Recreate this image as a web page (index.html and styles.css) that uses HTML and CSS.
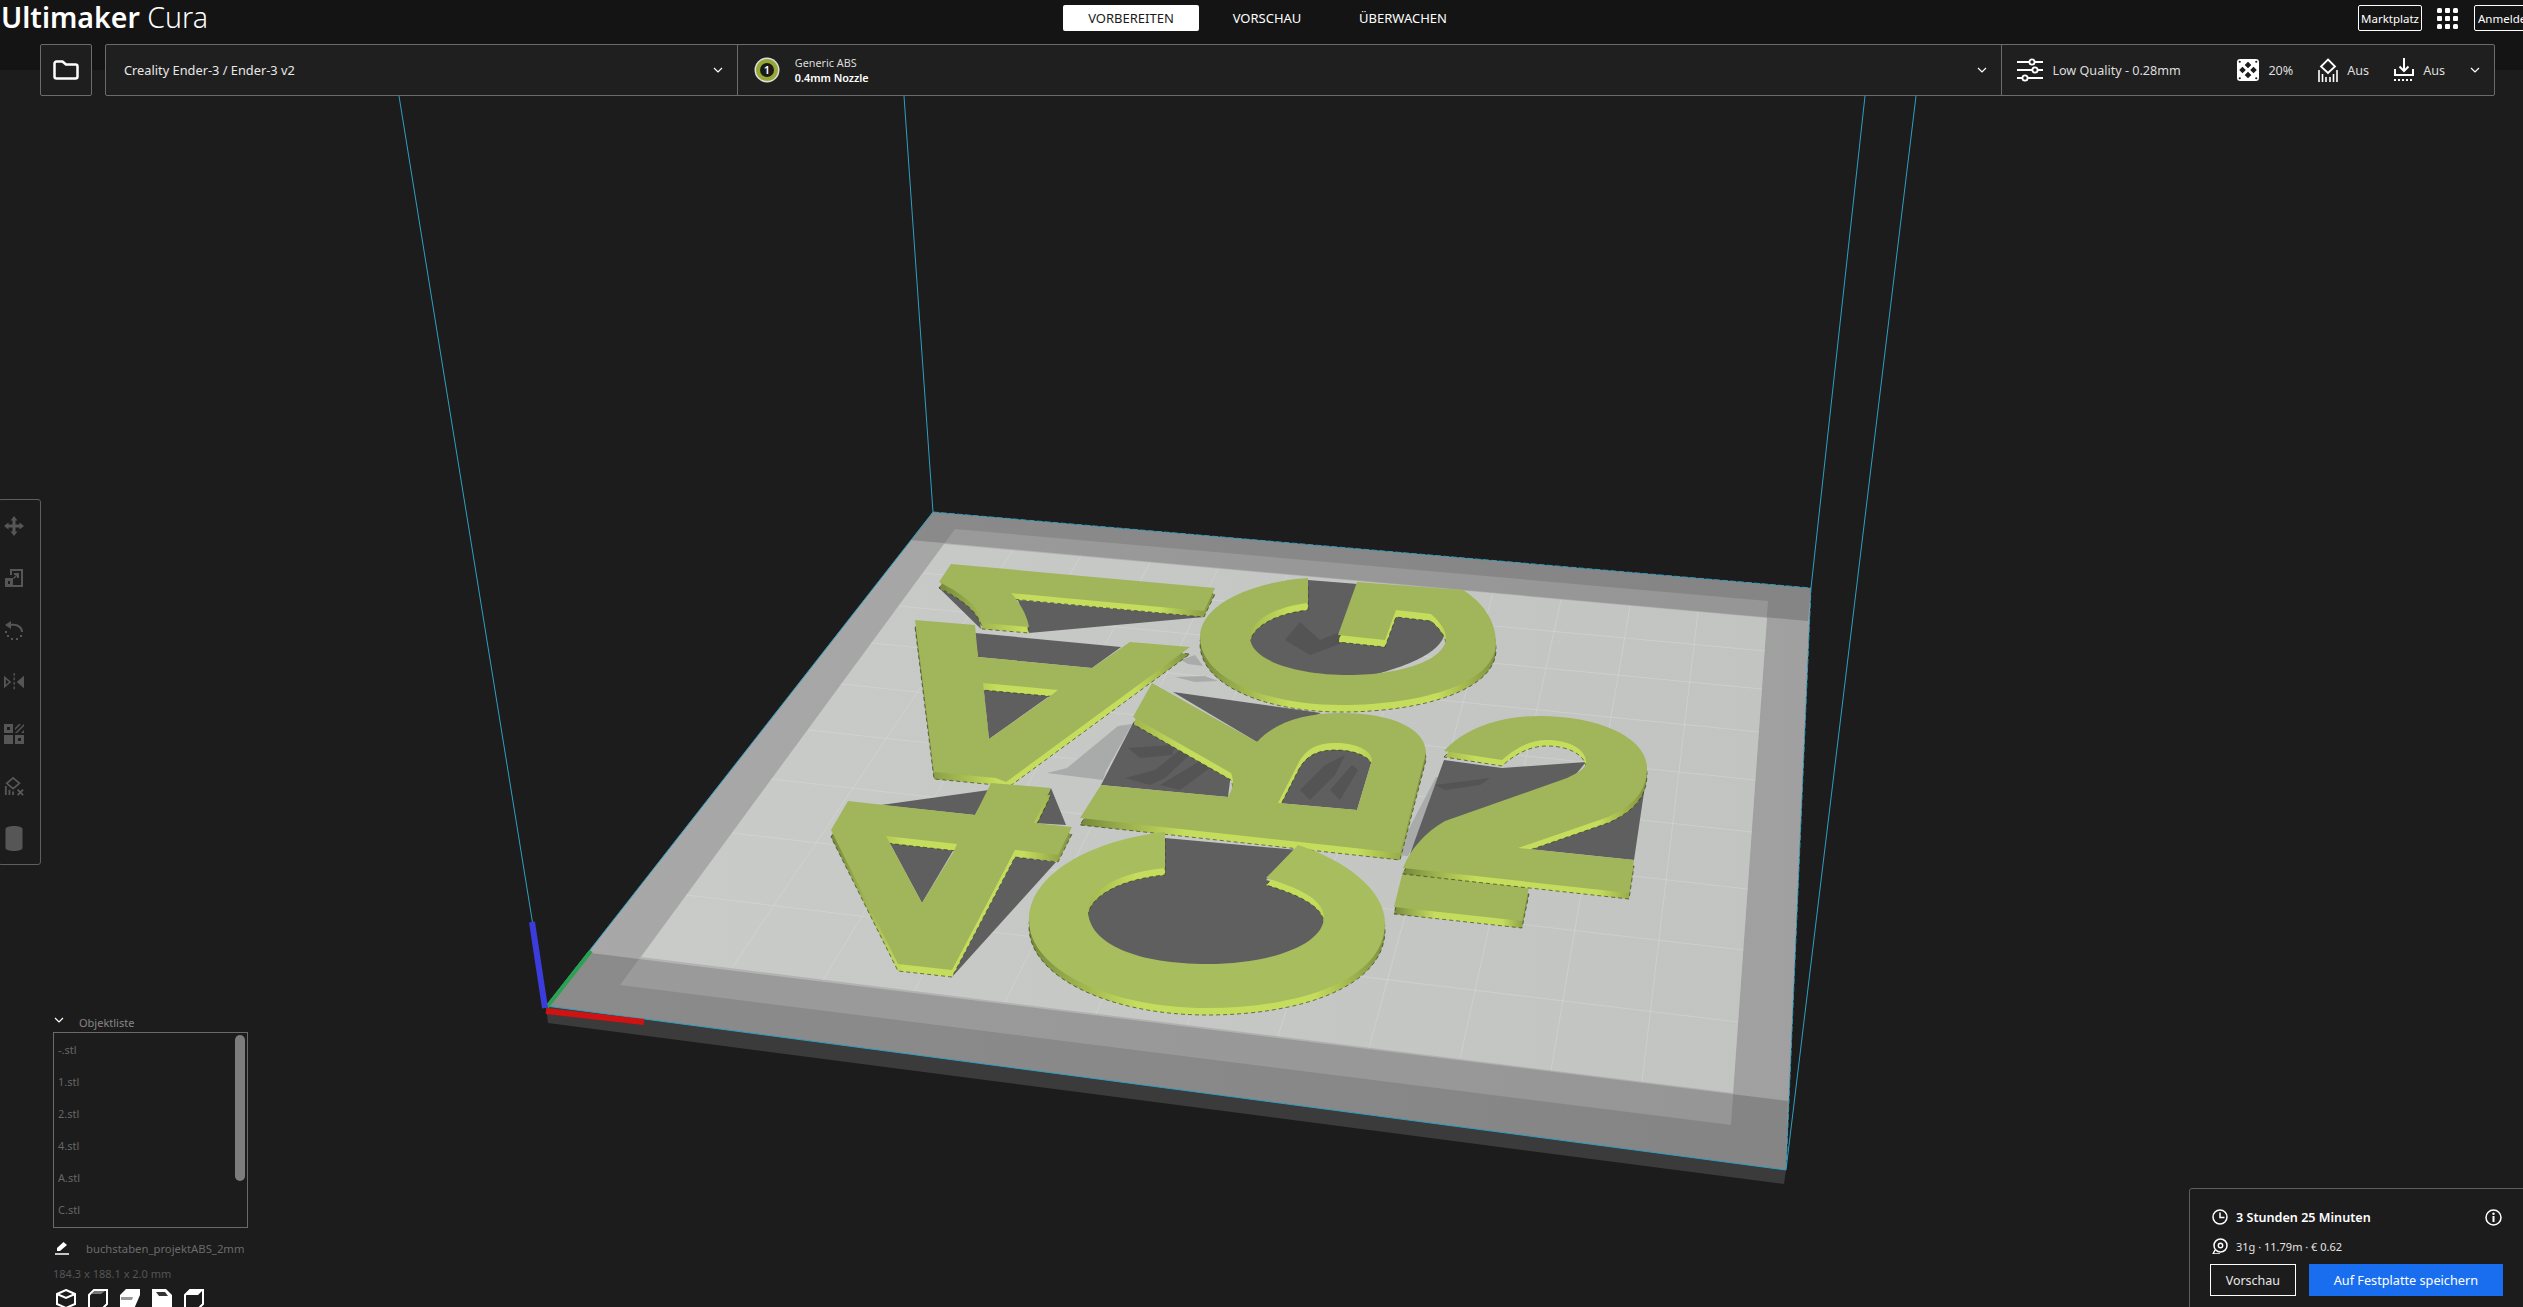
FILE: index.html
```html
<!DOCTYPE html>
<html lang="de">
<head>
<meta charset="utf-8">
<title>Ultimaker Cura</title>
<link rel="stylesheet" href="styles.css">
</head>
<body>
<svg class="scene" viewBox="0 0 2523 1307" width="2523" height="1307">
  <defs>
    <linearGradient id="sideGrad" x1="0" y1="0" x2="1" y2="0">
      <stop offset="0" stop-color="#76883a"/><stop offset=".1" stop-color="#93a84a"/>
      <stop offset=".3" stop-color="#c5dd5c"/><stop offset=".8" stop-color="#c5dd5c"/>
      <stop offset="1" stop-color="#7e9040"/>
    </linearGradient>
    <linearGradient id="plateGrad" x1="0" y1="0" x2="1" y2="0">
      <stop offset="0" stop-color="#c9cbc9"/><stop offset="1" stop-color="#c2c4c2"/>
    </linearGradient>
    <linearGradient id="bedGrad" x1="0" y1="0" x2="1" y2="0">
      <stop offset="0" stop-color="#a8a8a8"/><stop offset=".6" stop-color="#a4a4a4"/><stop offset="1" stop-color="#a0a0a0"/>
    </linearGradient>
    <path id="l1" d="M951,564 L1215,588 L1204,611 L1011,593 C1020,603 1027,615 1029,627 L982,623 C980,608 965,595 939,582 Z"/>
    <path id="lG" d="M1308,578 C1250,582 1200,605 1200,637 C1200,678 1265,705 1341,705 C1425,705 1496,682 1496,643 C1496,620 1482,602 1463,590 L1357,582 L1338,635 L1385,640 L1396,610 L1431,614 C1440,622 1446,630 1446,638 C1446,660 1400,675 1350,675 C1295,675 1250,660 1250,637 C1250,622 1272,607 1308,603 Z"/>
    <path id="lA" d="M915,620 L975,625 L978,657 L1092,668 L1130,642 L1190,647 L1006,782 L996,778 L934,772 Z M983,683 L989,739 L1049,697 L1058,690 Z"/>
    <path id="lB" d="M1152,683 L1257,742 C1275,722 1305,713 1341,713 C1395,713 1426,730 1426,753 L1400,853 L1080,818 L1101,785 L1228,797 C1235,785 1233,778 1231,773 L1133,717 Z M1278,803 L1357,810 L1372,760 C1372,750 1355,743 1336,743 C1315,743 1307,750 1300,760 Z"/>
    <path id="l4" d="M848,801 L975,815 L991,783 L1051,788 L1034,823 L1072,827 L1058,855 L1015,850 L952,970 L898,964 L831,830 Z M886,836 L922,903 L954,851 L957,844 Z"/>
    <path id="l2" d="M1444,751 C1465,728 1500,716 1539,716 C1600,716 1647,738 1647,768 C1647,790 1635,805 1608,817 L1518,848 L1634,860 L1629,893 L1403,868 C1410,850 1425,832 1445,821 L1567,778 C1580,772 1586,768 1586,762 C1586,750 1570,740 1547,740 C1530,740 1515,748 1502,760 Z"/>
    <path id="lD" d="M1403,871 L1529,887 L1522,921 L1394,907 Z"/>
    <path id="lC" d="M1165,832 C1090,840 1029,875 1029,920 C1029,970 1110,1008 1207,1008 C1300,1008 1385,980 1385,923 C1385,890 1345,860 1298,845 L1266,878 C1300,888 1324,900 1324,917 C1324,945 1270,964 1207,964 C1140,964 1088,945 1088,910 C1088,890 1120,872 1165,868 Z"/>
  </defs>

  <polygon class="bed-edge" points="546,1006 1786,1170 1784,1184 548,1023"/>
  <polygon fill="url(#bedGrad)" points="933,512 1811,588 1786,1170 546,1006"/>
  <polygon class="band" points="933,512 1811,588 1808,621 910,540"/>
  <polygon class="band" points="591,953 1788,1101 1786,1170 546,1006"/>
  <polygon class="inner" points="955,529 1768,601 1731,1125 620,985"/>
  <polygon fill="url(#plateGrad)" points="944,544 1767,618 1733,1093 641,957"/>
  <path class="grid" d="M1013,550L732,968M1081,556L823,980M1150,563L914,991M1218,569L1005,1002M1287,575L1096,1014M1356,581L1187,1025M1424,587L1278,1036M1493,593L1369,1048M1561,600L1460,1059M1630,606L1551,1070M1698,612L1642,1082M923,573L1765,651M899,606L1762,689M871,643L1759,732M841,684L1755,780M808,730L1752,832M771,779L1748,889M732,833L1743,950M686,895L1738,1022"/>

  <path class="wall" d="M399,96L546,1006L1786,1170L1916,96M904,96L933,512L546,1006M1865,96L1811,588"/>
  <path class="wall-dash" d="M933,512L1811,588L1786,1170"/>

  <path class="ghost" d="M1047,773 L1067,768 L1118,726 L1132,724 L1106,771 L1103,780 Z M1175,677 L1205,676 L1218,681 L1195,682 Z M1181,660 L1195,655 L1203,666 L1188,664 Z M1396,855 L1412,823 L1436,777 L1442,777 L1420,830 L1408,856 Z"/>

  <g class="hole">
    <polygon points="1018,600 1204,617 1029,633"/>
    <polygon points="939,588 981,629 977,608"/>
    <polygon points="975,633 1121,647 1092,668 978,657"/>
    <polygon points="983,683 1058,690 989,739"/>
    <path d="M1308,580 L1358,584 L1440,616 C1452,632 1450,660 1350,680 C1280,680 1240,660 1246,630 C1255,610 1290,600 1308,600 Z"/>
    <polygon points="1133,723 1231,773 1228,797 1101,785"/>
    <polygon points="1173,692 1257,742 1321,713"/>
    <path d="M1278,803 L1357,810 L1372,760 C1372,750 1355,743 1336,743 C1315,743 1307,750 1300,760 Z"/>
    <polygon points="881,805 989,790 975,815"/>
    <polygon points="1051,788 1034,823 1066,825"/>
    <polygon points="886,836 957,844 922,903"/>
    <polygon points="952,977 1015,857 1056,862"/>
    <polygon points="1444,760 1502,768 1586,762 1567,785 1410,854"/>
    <polygon points="1647,772 1518,848 1634,860"/>
    <path d="M1165,838 L1298,850 L1266,880 C1300,888 1330,900 1330,917 C1324,945 1270,970 1207,970 C1140,964 1084,945 1084,910 C1088,890 1120,868 1165,862 Z"/>
  </g>
  <path class="ghost-dark" d="M1128,748 L1175,745 L1172,755 L1140,758 Z M1125,778 L1155,770 L1190,742 L1200,745 L1165,778 L1150,785 Z M1160,785 L1210,755 L1218,762 L1180,790 Z M1300,790 L1325,765 L1345,755 L1335,775 L1310,800 Z M1330,790 L1352,765 L1358,770 L1340,800 Z M1285,640 L1300,622 L1320,640 L1345,630 L1350,640 L1310,655 Z M1435,785 L1490,778 L1480,785 L1445,790 Z"/>

  <g>
    <use href="#l1" class="side" transform="translate(0,6)"/><use href="#l1" class="top"/>
    <use href="#lG" class="side" transform="translate(0,7)"/><use href="#lG" class="top"/>
    <use href="#lA" class="side" transform="translate(0,7)"/><use href="#lA" class="top"/>
    <use href="#lB" class="side" transform="translate(0,7)"/><use href="#lB" class="top"/>
    <use href="#l4" class="side" transform="translate(0,7)"/><use href="#l4" class="top"/>
    <use href="#lD" class="side" transform="translate(0,7)"/><use href="#lD" class="top"/>
    <use href="#l2" class="side" transform="translate(0,6)"/><use href="#l2" class="top"/>
    <use href="#lC" class="side" transform="translate(0,7)"/><use href="#lC" class="top-c"/>
  </g>

  <line class="axis-g" x1="547" y1="1007" x2="591" y2="951"/>
  <line class="axis-b" x1="545" y1="1008" x2="532" y2="922"/>
  <line class="axis-r" x1="546" y1="1011" x2="644" y2="1022"/>
</svg>

<header class="header">
  <div class="logo"><span class="logo-bold">Ultimaker</span> <span class="logo-light">Cura</span></div>
  <nav class="tabs">
    <span class="tab tab-active">VORBEREITEN</span>
    <span class="tab">VORSCHAU</span>
    <span class="tab">ÜBERWACHEN</span>
  </nav>
  <div class="header-right">
    <span class="head-btn">Marktplatz</span>
    <svg class="apps" viewBox="0 0 21 21"><g fill="#fff"><rect x="0" y="0" width="5" height="5" rx="1.5"/><rect x="8" y="0" width="5" height="5" rx="1"/><rect x="16" y="0" width="5" height="5" rx="1.5"/><rect x="0" y="8" width="5" height="5" rx="1"/><rect x="8" y="8" width="5" height="5" rx="1"/><rect x="16" y="8" width="5" height="5" rx="1"/><rect x="0" y="16" width="5" height="5" rx="1.5"/><rect x="8" y="16" width="5" height="5" rx="1"/><rect x="16" y="16" width="5" height="5" rx="1.5"/></g></svg>
    <span class="head-btn head-btn-login">Anmelden</span>
  </div>
</header>

<div class="stage-menu">
  <div class="open-btn">
    <svg class="folder" viewBox="0 0 26 20"><path d="M1.5 3.5 a2 2 0 0 1 2-2 h6 l3.5 3 h9.500 a2 2 0 0 1 2 2 v10 a2 2 0 0 1-2 2 h-19 a2 2 0 0 1-2-2 Z" fill="none" stroke="#fff" stroke-width="2.500" stroke-linejoin="round"/></svg>
  </div>
  <div class="stage-panel">
    <div class="machine">
      <span>Creality Ender-3 / Ender-3 v2</span>
      <svg class="chev" viewBox="0 0 10 6"><path d="M1 1 L5 5 L9 1" fill="none" stroke="#fff" stroke-width="1.200"/></svg>
    </div>
    <div class="material">
      <svg class="extruder" viewBox="0 0 26 26"><circle cx="13" cy="13" r="12.500" fill="#ddd"/><circle cx="13" cy="13" r="11" fill="#95a836"/><circle cx="13" cy="13" r="7" fill="#1a1a1a"/><text x="13" y="17" text-anchor="middle" class="extruder-num">1</text></svg>
      <div class="material-text">
        <div>Generic ABS</div>
        <div class="nozzle">0.4mm Nozzle</div>
      </div>
      <svg class="chev chev-end" viewBox="0 0 10 6"><path d="M1 1 L5 5 L9 1" fill="none" stroke="#fff" stroke-width="1.200"/></svg>
    </div>
    <div class="quality">
      <svg class="i-sliders" viewBox="0 0 26 24"><g fill="none" stroke="#fff" stroke-width="1.800"><path d="M0 4 H12 M18 4 H26 M0 12 H15 M21 12 H26 M0 20 H5 M11 20 H26"/><circle cx="15" cy="4" r="2.600"/><circle cx="18" cy="12" r="2.600"/><circle cx="8" cy="20" r="2.600"/></g></svg>
      <span class="q-name">Low Quality - 0.28mm</span>
      <svg class="i-infill" viewBox="0 0 20 20"><rect width="20" height="20" rx="3" fill="#fff"/><g fill="#1c1c1c"><path d="M10 2.500 L13 5.500 L10 8.500 L7 5.500 Z M10 11.500 L13 14.500 L10 17.500 L7 14.500 Z M5 7 L8 10 L5 13 L2 10 Z M15 7 L18 10 L15 13 L12 10 Z"/><circle cx="2.500" cy="2.500" r="1"/><circle cx="17.500" cy="2.500" r="1"/><circle cx="2.500" cy="17.500" r="1"/><circle cx="17.500" cy="17.500" r="1"/></g></svg>
      <span class="q-val">20%</span>
      <svg class="i-support" viewBox="0 0 20 24"><path d="M10 1.500 L17 8.500 L10 15 L3 8.500 Z" fill="none" stroke="#fff" stroke-width="1.800"/><path d="M1 12 V24 M4.500 16 V24 M8 19 V24 M12 19 V24 M15.500 16 V24 M19 12 V24" stroke="#fff" stroke-width="1.600"/></svg>
      <span class="q-val">Aus</span>
      <svg class="i-adhesion" viewBox="0 0 20 24"><path d="M10 0 V13 M5.500 8.500 L10 13 L14.500 8.500" fill="none" stroke="#fff" stroke-width="2"/><path d="M1 11 V17 H19 V11" fill="none" stroke="#fff" stroke-width="2"/><path d="M0 22 H20" stroke="#fff" stroke-width="2" stroke-dasharray="2 2"/></svg>
      <span class="q-val">Aus</span>
      <svg class="chev chev-end" viewBox="0 0 10 6"><path d="M1 1 L5 5 L9 1" fill="none" stroke="#fff" stroke-width="1.200"/></svg>
    </div>
  </div>
</div>

<aside class="toolbar">
  <div class="tool"><svg viewBox="0 0 20 20"><path d="M10 0 L13.500 4.500 H11.500 V8.500 H15.500 V6.500 L20 10 L15.500 13.500 V11.500 H11.500 V15.500 H13.500 L10 20 L6.500 15.500 H8.500 V11.500 H4.500 V13.500 L0 10 L4.500 6.500 V8.500 H8.500 V4.500 H6.500 Z"/></svg></div>
  <div class="tool"><svg viewBox="0 0 20 20"><path d="M6 1 H19 V19 H9 V17 H17 V3 H8 V7 H6 Z M1 10 H9 V19 H1 Z M4 13 V16 H6 V13 Z M10 5 H15 V10 H13 V8 L10 11 L9 10 L12 7 H10 Z"/></svg></div>
  <div class="tool"><svg viewBox="0 0 20 20"><path d="M7 1 V4 C13 3 19 6 19 12 H17 C17 8 12 5 7 6 V9 L1 5 Z"/><path d="M1 11 h2 v2 h-2 Z M3 15 h2 v2 h-2 Z M7 18 h2 v2 h-2 Z M12 18 h2 v2 h-2 Z M16 15 h2 v2 h-2 Z"/></svg></div>
  <div class="tool"><svg viewBox="0 0 22 20"><path d="M0 3 L8 10 L0 17 Z M2 7 V13 L5.500 10 Z M22 3 L14 10 L22 17 Z"/><path d="M10.500 0 h1.500 v3 h-1.500 Z M10.500 5 h1.500 v3 h-1.500 Z M10.500 10 h1.500 v3 h-1.500 Z M10.500 15 h1.500 v3 h-1.500 Z"/></svg></div>
  <div class="tool"><svg viewBox="0 0 20 20"><path d="M0 0 H9 V9 H0 Z M3 3 V6 H6 V3 Z M11 11 H20 V20 H11 Z M14 14 V17 H17 V14 Z M0 11 H9 V20 H0 Z M11 4 L15 0 H17 L11 6 Z M11 9 L20 0 V2 L13 9 Z M17 9 L20 6 V9 Z"/></svg></div>
  <div class="tool"><svg viewBox="0 0 22 20"><path d="M10 1 L17 7 L10 13 L3 7 Z" fill="none" stroke="#5a5a5a" stroke-width="1.800"/><path d="M1 10 h2 v10 h-2 Z M5 14 h2 v6 h-2 Z M9 16 h2 v4 h-2 Z"/><path d="M15 14 L21 20 M21 14 L15 20" stroke="#5a5a5a" stroke-width="2"/></svg></div>
  <div class="tool"><svg class="cyl" viewBox="0 0 17 25"><path d="M0 3 C0 -1 17 -1 17 3 V22 C17 26 0 26 0 22 Z"/></svg></div>
</aside>

<section class="objects">
  <div class="objects-head">
    <svg class="obj-chev" viewBox="0 0 10 6"><path d="M1 1 L5 5 L9 1" fill="none" stroke="#fff" stroke-width="1.200"/></svg>
    <span>Objektliste</span>
  </div>
  <div class="objects-box">
    <div class="obj-row">-.stl</div>
    <div class="obj-row">1.stl</div>
    <div class="obj-row">2.stl</div>
    <div class="obj-row">4.stl</div>
    <div class="obj-row">A.stl</div>
    <div class="obj-row">C.stl</div>
    <div class="scrollbar"></div>
  </div>
  <div class="name-row">
    <svg class="pencil" viewBox="0 0 14 13"><path d="M8.500 0 L12 3 L5 9 H2 V6 Z" fill="#fff"/><path d="M0 12 H14" stroke="#fff" stroke-width="1.500"/></svg>
    <span>buchstaben_projektABS_2mm</span>
  </div>
  <div class="dims">184.3 x 188.1 x 2.0 mm</div>
  <div class="views">
    <svg viewBox="0 0 20 20"><path d="M10 1 L19 5 V15 L10 19 L1 15 V5 Z" fill="none" stroke="#fff" stroke-width="2"/><path d="M1 5 L10 9 L19 5" fill="none" stroke="#fff" stroke-width="2"/></svg>
    <svg viewBox="0 0 20 20"><path d="M6 1 H19 V15 L14 20 H1 V6 Z" fill="none" stroke="#fff" stroke-width="2"/><path d="M3 5 L7 2 H17 L13 5 Z" fill="#777"/></svg>
    <svg viewBox="0 0 20 20"><path d="M6 0 H20 V6 L14 20 H0 V6 Z" fill="#fff"/><path d="M1 8 H13 L12 11 H1 Z" fill="#9a9a9a"/></svg>
    <svg viewBox="0 0 20 20"><path d="M0 0 H14 L20 6 V20 H0 Z" fill="#fff"/><path d="M4 3 H13 L16 7 H7 Z" fill="#333"/></svg>
    <svg viewBox="0 0 20 20"><path d="M6 1 H19 V15 L14 20 H1 V6 Z" fill="none" stroke="#fff" stroke-width="2"/><path d="M1 6 L6 1 H19 L14 6 Z" fill="#fff"/></svg>
  </div>
</section>

<section class="action">
  <div class="action-row time-row">
    <svg class="a-icon" viewBox="0 0 16 16"><circle cx="8" cy="8" r="7" fill="none" stroke="#fff" stroke-width="1.500"/><path d="M8 3.500 V8.500 H12.500" fill="none" stroke="#fff" stroke-width="1.500"/></svg>
    <span class="time">3 Stunden 25 Minuten</span>
    <svg class="a-info" viewBox="0 0 17 17"><circle cx="8.500" cy="8.500" r="7.500" fill="none" stroke="#fff" stroke-width="1.500"/><path d="M8.500 7 V13" stroke="#fff" stroke-width="2"/><circle cx="8.500" cy="4.700" r="1.200" fill="#fff"/></svg>
  </div>
  <div class="action-row cost-row">
    <svg class="a-icon" viewBox="0 0 16 16"><circle cx="8.500" cy="7.500" r="6.500" fill="none" stroke="#fff" stroke-width="1.500"/><circle cx="8.500" cy="7.500" r="2.200" fill="none" stroke="#fff" stroke-width="1.400"/><path d="M3 12 L1 16 H8" fill="none" stroke="#fff" stroke-width="1.400"/></svg>
    <span class="cost">31g · 11.79m · € 0.62</span>
  </div>
  <div class="action-buttons">
    <span class="btn-outline">Vorschau</span>
    <span class="btn-blue">Auf Festplatte speichern</span>
  </div>
</section>
</body>
</html>
```
FILE: styles.css
```css
* { box-sizing: border-box; }
html, body { margin: 0; padding: 0; }
body {
  width: 2523px;
  height: 1307px;
  position: relative;
  overflow: hidden;
  font-family: "Noto Sans", "Liberation Sans", sans-serif;
  color: #fff;
  background: linear-gradient(#141414 70px, #1c1c1c 70px);
}
.scene { position: absolute; left: 0; top: 0; display: block; }

/* scene */
.bed-edge { fill: #3b3b3b; }
.band { fill: #000; opacity: .17; }
.inner { fill: #fff; opacity: .14; }
.grid { stroke: #e2e4e2; stroke-width: 1; opacity: .32; fill: none; }
.wall { stroke: #2f9fc2; stroke-width: 1; fill: none; }
.wall-dash { stroke: #2f9fc2; stroke-width: 1; fill: none; stroke-dasharray: 6 2; }
.ghost { fill: #a9abab; }
.ghost-dark { fill: #545454; }
.hole { fill: #5f5f5f; }
.side { fill: url(#sideGrad); fill-rule: evenodd; stroke: #26280f; stroke-width: .6; stroke-dasharray: 4 3; }
.top { fill: #a1b55b; fill-rule: evenodd; }
.top-c { fill: #a7bd5e; fill-rule: evenodd; }
.axis-b { stroke: #3c3cdc; stroke-width: 6; }
.axis-g { stroke: #2aa252; stroke-width: 4; }
.axis-r { stroke: #d01212; stroke-width: 6; }

/* header */
.header {
  position: relative;
  height: 44px;
  display: flex;
  align-items: flex-start;
}
.logo {
  width: 1063px;
  padding-left: 1px;
  font-size: 28.500px;
  line-height: 35px;
  white-space: nowrap;
}
.logo-bold { font-weight: 600; }
.logo-light { font-weight: 300; }
.tabs { display: flex; margin-top: 5px; }
.tab {
  width: 136px;
  height: 26px;
  display: flex;
  align-items: center;
  justify-content: center;
  font-size: 13px;
  border-radius: 2px;
}
.tab-active { background: #fff; color: #1a1a1a; }
.header-right {
  margin-left: auto;
  margin-right: -31px;
  margin-top: 5px;
  display: flex;
  align-items: center;
}
.head-btn {
  height: 26px;
  padding: 0 3px;
  display: flex;
  align-items: center;
  border: 1px solid #fff;
  border-radius: 2px;
  font-size: 11.500px;
  width: 64px;
  justify-content: center;
  white-space: nowrap;
}
.apps { width: 21px; height: 21px; margin: 0 16px 0 15px; }
.head-btn-login { width: 80px; justify-content: flex-start; }

/* stage menu */
.stage-menu {
  position: relative;
  display: flex;
  gap: 13px;
  margin-left: 40px;
  height: 52px;
  width: 2455px;
}
.open-btn {
  width: 52px;
  border: 1px solid #6b6b6b;
  border-radius: 2px;
  background: #1e1e1e;
  display: flex;
  align-items: center;
  justify-content: center;
}
.folder { width: 26px; height: 20px; }
.stage-panel {
  width: 2390px;
  display: flex;
  background: #1f1f1f;
  border: 1px solid #6b6b6b;
  border-radius: 2px;
}
.machine {
  width: 632px;
  border-right: 1px solid #6b6b6b;
  display: flex;
  align-items: center;
  padding-left: 18px;
  font-size: 12.800px;
  color: #e8e8e8;
}
.chev { width: 10px; height: 6px; flex: none; }
.machine .chev { margin-left: auto; margin-right: 14px; }
.chev-end { margin-left: auto; }
.material {
  width: 1265px;
  border-right: 1px solid #6b6b6b;
  display: flex;
  align-items: center;
  padding: 0 14px 0 16px;
}
.extruder { width: 26px; height: 26px; flex: none; }
.extruder-num { font-size: 11px; fill: #fff; font-weight: 600; }
.material-text { margin-left: 15px; font-size: 10.800px; line-height: 15px; color: #dcdcdc; }
.nozzle { font-weight: 600; color: #fff; }
.quality {
  flex: 1;
  display: flex;
  align-items: center;
  padding: 0 14px 0 15px;
  font-size: 12.600px;
  color: #dedede;
}
.i-sliders { width: 26px; height: 24px; flex: none; margin-right: 9px; }
.q-name { width: 129px; white-space: nowrap; margin-right: 56px; }
.i-infill { width: 22px; height: 22px; flex: none; margin-right: 9px; }
.i-support { width: 20px; height: 24px; flex: none; margin-right: 9px; }
.i-adhesion { width: 20px; height: 24px; flex: none; margin-right: 9px; }
.q-val { white-space: nowrap; margin-right: 25px; }

/* left toolbar */
.toolbar {
  position: absolute;
  left: -2px;
  top: 499px;
  width: 43px;
  height: 366px;
  border: 1px solid #5e5e5e;
  border-radius: 3px;
  padding-left: 5px;
  display: flex;
  flex-direction: column;
}
.tool { height: 52px; display: flex; align-items: center; }
.tool svg { width: 20px; height: 20px; fill: #565656; }
.tool .cyl { height: 25px; }

/* object list */
.objects {
  position: absolute;
  left: 53px;
  top: 1012px;
  width: 200px;
  color: #6a6a6a;
}
.objects-head {
  height: 20px;
  display: flex;
  align-items: center;
  font-size: 11px;
  color: #868686;
}
.obj-chev { width: 10px; height: 6px; margin: 0 15px 4px 1px; }
.objects-box {
  position: relative;
  width: 195px;
  height: 196px;
  border: 1px solid #6a6a6a;
  padding: 0 0 0 4px;
}
.obj-row { height: 32px; display: flex; align-items: center; font-size: 11px; color: #666; }
.scrollbar {
  position: absolute;
  left: 181px;
  top: 2px;
  width: 10px;
  height: 146px;
  border-radius: 5px;
  background: #7c7c7c;
}
.name-row {
  display: flex;
  align-items: center;
  margin-top: 10px;
  height: 20px;
  font-size: 11.300px;
  white-space: nowrap;
}
.pencil { width: 14px; height: 13px; margin: 0 17px 0 2px; flex: none; }
.dims { margin-top: 7px; height: 18px; line-height: 18px; font-size: 11px; color: #555; }
.views { display: flex; gap: 12px; margin-top: 6px; padding-left: 3px; }
.views svg { width: 20px; height: 20px; flex: none; }

/* action panel */
.action {
  position: absolute;
  left: 2189px;
  top: 1188px;
  right: -4px;
  bottom: -4px;
  background: #1c1c1c;
  border: 1px solid #5e5e5e;
  border-radius: 3px;
  padding: 19px 23px 0 20px;
}
.action-row { display: flex; align-items: center; padding-left: 2px; }
.a-icon { width: 16px; height: 16px; flex: none; margin-right: 8px; }
.time-row { height: 18px; }
.time { font-size: 12.600px; font-weight: 600; }
.a-info { width: 17px; height: 17px; margin-left: auto; margin-right: 1px; }
.cost-row { height: 16px; margin-top: 12px; }
.cost { font-size: 11px; color: #e4e4e4; }
.action-buttons { display: flex; gap: 13px; margin-top: 10px; height: 32px; }
.btn-outline {
  width: 86px;
  border: 1px solid #fff;
  display: flex;
  align-items: center;
  justify-content: center;
  font-size: 12.500px;
  color: #e8e8e8;
}
.btn-blue {
  width: 195px;
  background: #196ef0;
  display: flex;
  align-items: center;
  justify-content: center;
  font-size: 12.700px;
}
```
